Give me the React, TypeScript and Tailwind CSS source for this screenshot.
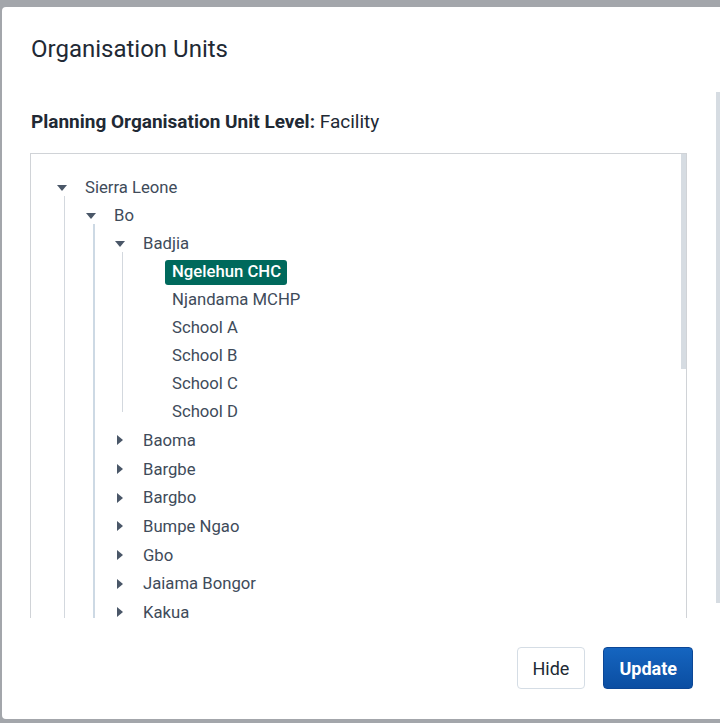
import React from "react";

type Node = {
  label: string;
  open?: boolean;
  hasChildren?: boolean;
  selected?: boolean;
  children?: Node[];
};

const tree: Node[] = [
  {
    label: "Sierra Leone",
    open: true,
    hasChildren: true,
    children: [
      {
        label: "Bo",
        open: true,
        hasChildren: true,
        children: [
          {
            label: "Badjia",
            open: true,
            hasChildren: true,
            children: [
              { label: "Ngelehun CHC", selected: true },
              { label: "Njandama MCHP" },
              { label: "School A" },
              { label: "School B" },
              { label: "School C" },
              { label: "School D" },
            ],
          },
          { label: "Baoma", hasChildren: true },
          { label: "Bargbe", hasChildren: true },
          { label: "Bargbo", hasChildren: true },
          { label: "Bumpe Ngao", hasChildren: true },
          { label: "Gbo", hasChildren: true },
          { label: "Jaiama Bongor", hasChildren: true },
          { label: "Kakua", hasChildren: true },
          { label: "Komboya", hasChildren: true },
          { label: "Lugbu", hasChildren: true },
        ],
      },
    ],
  },
];

function Arrow({ open }: { open?: boolean }) {
  if (open) {
    return (
      <svg width="10" height="6" viewBox="0 0 10 6" className="block">
        <path d="M0 0h10L5 6z" fill="#4a5768" />
      </svg>
    );
  }
  return (
    <svg width="6" height="10" viewBox="0 0 6 10" className="block">
      <path d="M0 0l6 5-6 5z" fill="#4a5768" />
    </svg>
  );
}

function TreeNode({ node, depth }: { node: Node; depth: number }) {
  // collapsed rows in the original are a touch taller than open ones / leaves
  const rowH = node.hasChildren && !node.open ? "h-[28.7px]" : "h-[28px]";
  const lineColour = depth === 1 ? "w-[2px] bg-[#cdd9e4]" : "w-px bg-[#d3d8de]";
  return (
    <div>
      <div className={`flex items-center ${rowH}`}>
        <div className="w-[24px] flex justify-center items-center">
          {node.hasChildren && <Arrow open={node.open} />}
        </div>
        <span
          className={
            node.selected
              ? "ml-[4px] px-[6px] h-[25px] flex items-center rounded-[3px] bg-[#00695c] text-white font-medium"
              : "ml-[4px] px-[7px] h-[25px] flex items-center"
          }
        >
          {node.selected ? <span className="pl-[1px]">{node.label}</span> : node.label}
        </span>
      </div>
      {node.open && node.children && (
        <div className="relative pl-[29px]">
          <span className={`absolute left-[14px] top-[-6px] bottom-[14px] ${lineColour}`} />
          {node.children.map((c) => (
            <TreeNode key={c.label} node={c} depth={depth + 1} />
          ))}
        </div>
      )}
    </div>
  );
}

export default function App() {
  return (
    <div
      className="w-[720px] h-[723px] overflow-hidden bg-[#a3a6ab] pt-[7px] pl-[2px]"
      style={{ fontFamily: "Roboto, 'Liberation Sans', sans-serif" }}
    >
      <div className="w-[718px] h-[712px] bg-white rounded-l-[4px] flex flex-col">
        {/* header */}
        <div className="h-[85px] pt-[28px] px-[29px]">
          <h1 className="text-[24px] leading-[28px] font-normal text-[#212934]">
            Organisation Units
          </h1>
        </div>

        {/* content */}
        <div className="h-[526px] flex overflow-hidden">
          <div className="flex-1 pl-[28px] pr-[29px] pt-[19px]">
            <p className="text-[19px] leading-[22px] text-[#212934] pl-[1px]">
              <span className="font-bold">Planning Organisation Unit Level:</span> Facility
            </p>
            <div className="mt-[20px] h-[520px] border border-[#d0d3d7] flex">
              <div className="flex-1 pt-[20px] pl-[19px] text-[16.7px] text-[#404b5a]">
                {tree.map((n) => (
                  <TreeNode key={n.label} node={n} depth={0} />
                ))}
              </div>
              <div className="w-[5px] h-[215px] bg-[#d6dce2]" />
            </div>
          </div>
          <div className="w-[4px] h-[511px] bg-[#d6dce2]" />
        </div>

        {/* footer */}
        <div className="flex-1 flex justify-end items-start pt-[29px] pr-[27px]">
          <button className="h-[42px] px-[15px] rounded-[4px] border border-[#d5dde5] bg-white text-[18px] text-[#212934]">
            Hide
          </button>
          <button className="ml-[18px] h-[42px] px-[15px] rounded-[4px] border border-[#0c4796] bg-gradient-to-b from-[#1565c0] to-[#0b4ea2] text-[18px] font-bold text-white">
            Update
          </button>
        </div>
      </div>
    </div>
  );
}
